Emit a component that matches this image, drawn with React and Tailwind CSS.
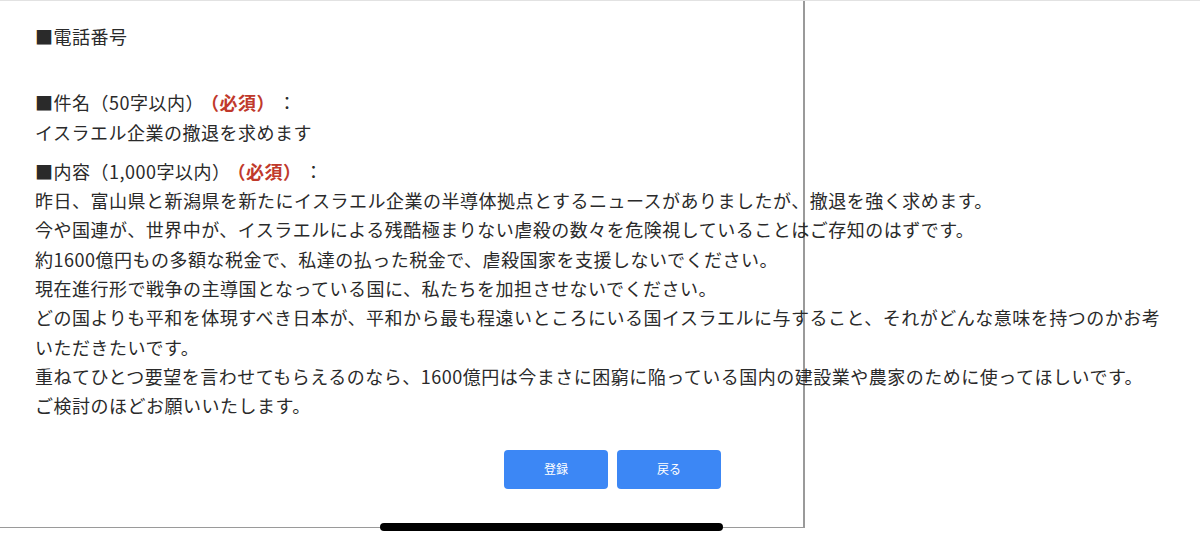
import React from 'react';

const font = { fontFamily: '"Noto Sans CJK JP", "Noto Sans", sans-serif' };

const bodyLines = [
  '昨日、富山県と新潟県を新たにイスラエル企業の半導体拠点とするニュースがありましたが、撤退を強く求めます。',
  '今や国連が、世界中が、イスラエルによる残酷極まりない虐殺の数々を危険視していることはご存知のはずです。',
  '約1600億円もの多額な税金で、私達の払った税金で、虐殺国家を支援しないでください。',
  '現在進行形で戦争の主導国となっている国に、私たちを加担させないでください。',
  'どの国よりも平和を体現すべき日本が、平和から最も程遠いところにいる国イスラエルに与すること、それがどんな意味を持つのかお考',
  'いただきたいです。',
  '重ねてひとつ要望を言わせてもらえるのなら、1600億円は今まさに困窮に陥っている国内の建設業や農家のために使ってほしいです。',
  'ご検討のほどお願いいたします。',
];

const Required = () => (
  <>
    <span className="ml-[6px] font-bold text-[#c0392b]">（必須）</span>
    <span className="ml-[12px]">：</span>
  </>
);

const App = () => {
  return (
    <div className="relative w-[1200px] h-[544px] bg-white border-t border-[#e2e2e2] overflow-hidden" style={font}>
      <div className="w-[805px] h-[527px] border-r-2 border-b border-[#9a9a9a] pl-[35px] pt-[21px] text-[18px] leading-[29.3px] tracking-[0.5px] text-[#2a2a2a] whitespace-nowrap">
        <div>■電話番号</div>

        <div className="mt-[37px]">■件名（50字以内）<Required /></div>
        <div>イスラエル企業の撤退を求めます</div>

        <div className="mt-[10px]">■内容（1,000字以内）<Required /></div>
        {bodyLines.map((line, i) => (
          <div key={i}>{line}</div>
        ))}

        <div className="flex gap-[9px] pl-[469px] mt-[29px] tracking-normal">
          <button className="w-[104px] h-[39px] rounded-[4px] bg-[#3c87f5] text-white text-[12px] leading-none">登録</button>
          <button className="w-[104px] h-[39px] rounded-[4px] bg-[#3c87f5] text-white text-[12px] leading-none">戻る</button>
        </div>
      </div>

      {/* home indicator */}
      <div className="absolute left-[380px] top-[522px] w-[343px] h-[8px] rounded-full bg-black" />
    </div>
  );
};

export default App;
